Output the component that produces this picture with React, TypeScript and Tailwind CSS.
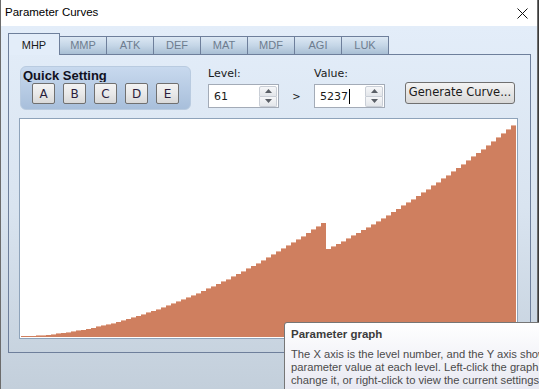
import React from "react";

const CHART_W = 497;
const CHART_H = 219;

function barHeights(): number[] {
  const hs: number[] = [];
  for (let k = 0; k < 99; k++) {
    if (k <= 60) {
      hs.push(1 + 113 * Math.pow(k / 60, 1.8));
    } else {
      const d = k - 61;
      hs.push(88 + 2.58 * d + 0.0208 * d * d);
    }
  }
  return hs;
}

function Chart() {
  const hs = barHeights();
  return (
    <svg width={CHART_W} height={CHART_H} className="block">
      {hs.map((h, k) => {
        const solid = Math.floor(h);
        const frac = h - solid;
        const x = 1 + 5 * k;
        const bottom = CHART_H - 1;
        return (
          <g key={k}>
            {solid > 0 && (
              <rect x={x} y={bottom - solid} width={5} height={solid} fill="#cf7f5f" />
            )}
            {(frac >= 0.3 || solid === 0) && (
              <rect x={x} y={bottom - solid - 1} width={5} height={1} fill="#e6b5a0" />
            )}
          </g>
        );
      })}
    </svg>
  );
}

function Spinner() {
  return (
    <div className="flex flex-col w-[18px] h-[21px] gap-0">
      <div className="flex-1 flex items-center justify-center border border-[#c9ced6] bg-gradient-to-b from-[#f6f7f9] to-[#e3e6ea] rounded-t-[2px]">
        <svg width="7" height="4" viewBox="0 0 7 4"><path d="M0 4 L3.5 0 L7 4 Z" fill="#5a5f66" /></svg>
      </div>
      <div className="flex-1 flex items-center justify-center border border-t-0 border-[#c9ced6] bg-gradient-to-b from-[#f6f7f9] to-[#e3e6ea] rounded-b-[2px]">
        <svg width="7" height="4" viewBox="0 0 7 4"><path d="M0 0 L3.5 4 L7 0 Z" fill="#5a5f66" /></svg>
      </div>
    </div>
  );
}

function NumBox({ value, caret }: { value: string; caret?: boolean }) {
  return (
    <div className="w-[71px] h-[24px] border border-[#a3abb7] bg-white flex items-center justify-between pl-[5px] pr-[1px]">
      <div className="flex items-center text-[11px] text-[#1a1a1a] leading-none">
        <span>{value}</span>
        {caret && <span className="inline-block w-px h-[15px] bg-black ml-[1px]" />}
      </div>
      <Spinner />
    </div>
  );
}

function QBtn({ label }: { label: string }) {
  return (
    <div className="w-[23px] h-[21px] border border-[#707070] rounded-[2px] bg-gradient-to-b from-[#f3f3f3] via-[#e9e9e9] to-[#d9d9d9] flex items-center justify-center text-[12px] text-[#2a1d3c] leading-none">
      {label}
    </div>
  );
}

export default function App() {
  const tabs = ["MMP", "ATK", "DEF", "MAT", "MDF", "AGI", "LUK"];
  return (
    <div
      className="w-[539px] h-[389px] overflow-hidden relative bg-[#3a3a3a]"
      style={{ fontFamily: '"DejaVu Sans", sans-serif' }}
    >
      <div className="w-[538px] h-[389px] border-l border-r border-[#6c6c6c] flex flex-col">
        {/* Title bar */}
        <div className="h-[26px] bg-white flex items-center justify-between pl-[4px] pr-[9px] shrink-0">
          <span
            className="text-[11.5px] text-black"
            style={{ fontFamily: '"Liberation Sans", Arial, sans-serif' }}
          >
            Parameter Curves
          </span>
          <svg width="11" height="11" viewBox="0 0 11 11">
            <path d="M0.5 0.5 L10.5 10.5 M10.5 0.5 L0.5 10.5" stroke="#111" strokeWidth="1" />
          </svg>
        </div>
        {/* Body */}
        <div className="flex-1 bg-gradient-to-b from-[#e3edf9] via-[#d9e4f0] to-[#c3cfdb] pt-[7px] pl-[7px]">
          {/* Tabs */}
          <div
            className="flex items-end h-[22px] relative z-10"
            style={{ fontFamily: '"Liberation Sans", Arial, sans-serif' }}
          >
            <div className="w-[52px] h-[22px] border border-b-0 border-[#6e7f9b] bg-[#e3edf9] flex items-center justify-center text-[11px] text-[#1a1a1a] pt-[1px]">
              MHP
            </div>
            {tabs.map((t) => (
              <div
                key={t}
                className="w-[48px] h-[18px] -ml-px first:ml-0 border border-b-0 border-[#6e7f9b] bg-gradient-to-b from-[#dce8f4] via-[#c5d6e7] to-[#a9bfd4] flex items-center justify-center text-[11px] text-[#6d7c8f] mb-[1px]"
              >
                {t}
              </div>
            ))}
          </div>
          {/* Panel */}
          <div className="w-[523px] h-[299px] -mt-px border border-[#6e7f9b] pl-[10px] pt-[11px] flex flex-col">
            <div className="flex items-start h-[44px]">
              {/* Quick Setting */}
              <div className="ml-[1px] w-[171px] h-[44px] rounded-[6px] border border-[#b9cbe0] bg-gradient-to-b from-[#c8d9ee] to-[#a8bfdb] pl-[11px] flex flex-col">
                <div
                  className="h-[14px] overflow-hidden text-[13px] font-bold text-[#101020] leading-[16px] -ml-[9px] mt-[1px]"
                  style={{ fontFamily: '"Liberation Sans", Arial, sans-serif' }}
                >
                  Quick Setting
                </div>
                <div className="flex gap-[8px] mt-[1px]">
                  {["A", "B", "C", "D", "E"].map((l) => (
                    <QBtn key={l} label={l} />
                  ))}
                </div>
              </div>
              {/* Level */}
              <div className="ml-[17px] flex flex-col">
                <div className="h-[16px] text-[11px] text-[#1a1a1a] leading-[16px] mb-[2px]">Level:</div>
                <NumBox value="61" />
              </div>
              <div className="w-[35px] h-[44px] flex items-center justify-center pt-[16px] text-[10px] text-[#1a1a1a]">
                &gt;
              </div>
              {/* Value */}
              <div className="flex flex-col">
                <div className="h-[16px] text-[11px] text-[#1a1a1a] leading-[16px] mb-[2px]">Value:</div>
                <NumBox value="5237" caret />
              </div>
              <div className="ml-[20px] mt-[16px] w-[110px] h-[22px] border border-[#707070] rounded-[3px] bg-gradient-to-b from-[#f3f3f3] via-[#e6e6e6] to-[#d8d8d8] flex items-center justify-center text-[11.5px] text-[#1a1a1a]">
                Generate Curve...
              </div>
            </div>
            {/* Chart */}
            <div className="mt-[8px] w-[499px] h-[221px] border border-[#8ea3ba] bg-white">
              <Chart />
            </div>
          </div>
        </div>
      </div>
      {/* Tooltip */}
      <div
        className="absolute left-[284px] top-[322px] w-[270px] h-[80px] border border-[#767676] rounded-[3px] bg-gradient-to-b from-white to-[#e4e5f0] pl-[6px] pt-[3px] text-[#4b4b4b]"
        style={{ fontFamily: '"Liberation Sans", Arial, sans-serif' }}
      >
        <div className="text-[11.5px] font-bold leading-[16px] text-[#3c3c3c]">Parameter graph</div>
        <div className="mt-[6px] text-[11.2px] leading-[13px] whitespace-nowrap">
          <div>The X axis is the level number, and the Y axis shows the</div>
          <div>parameter value at each level. Left-click the graph to</div>
          <div>change it, or right-click to view the current settings.</div>
        </div>
      </div>
    </div>
  );
}
